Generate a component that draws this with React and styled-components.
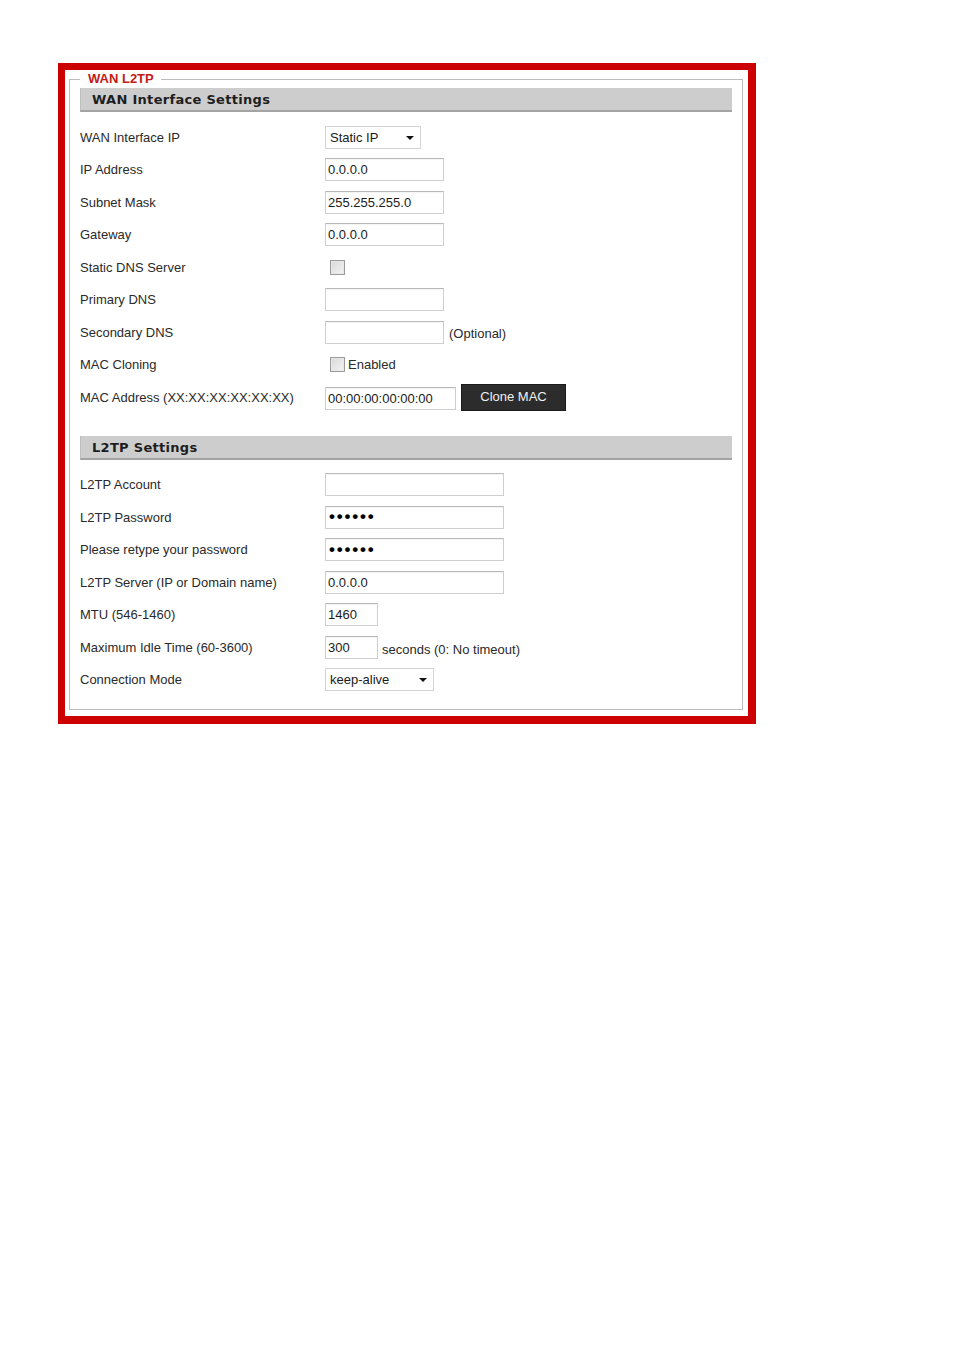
import React from 'react'
import styled, { createGlobalStyle } from 'styled-components'

const GlobalStyle = createGlobalStyle`
  html, body {
    margin: 0;
    padding: 0;
    background: #fff;
  }
  body {
    font-family: "Liberation Sans", Arial, sans-serif;
    font-size: 13px;
    color: #222;
  }
`;

const wanRows = [
    { label: "WAN Interface IP", kind: "select", value: "Static IP", width: 96 },
    { label: "IP Address", kind: "text", value: "0.0.0.0", width: 119 },
    { label: "Subnet Mask", kind: "text", value: "255.255.255.0", width: 119 },
    { label: "Gateway", kind: "text", value: "0.0.0.0", width: 119 },
    { label: "Static DNS Server", kind: "check" },
    { label: "Primary DNS", kind: "text", value: "", width: 119 },
    { label: "Secondary DNS", kind: "text", value: "", width: 119, note: "(Optional)" },
    { label: "MAC Cloning", kind: "check", note: "Enabled" },
    { label: "MAC Address (XX:XX:XX:XX:XX:XX)", kind: "mac", value: "00:00:00:00:00:00", width: 131 },
];

const l2tpRows = [
    { label: "L2TP Account", kind: "text", value: "", width: 179 },
    { label: "L2TP Password", kind: "password", value: "secret", width: 179 },
    { label: "Please retype your password", kind: "password", value: "secret", width: 179 },
    { label: "L2TP Server (IP or Domain name)", kind: "text", value: "0.0.0.0", width: 179 },
    { label: "MTU (546-1460)", kind: "text", value: "1460", width: 53 },
    { label: "Maximum Idle Time (60-3600)", kind: "text", value: "300", width: 53, note: "seconds (0: No timeout)", low: true },
    { label: "Connection Mode", kind: "select", value: "keep-alive", width: 109 },
];

const Control = ({ kind, value, width, note, low }) => {
    if (kind === "select") {
        return (
            <SelectWrap $width={width}>
                <Select defaultValue={value}>
                    <option>{value}</option>
                </Select>
            </SelectWrap>
        );
    }
    if (kind === "check") {
        return (
            <CheckLabel>
                <Checkbox type="checkbox" />
                {note && <span>{note}</span>}
            </CheckLabel>
        );
    }
    if (kind === "mac") {
        return (
            <>
                <TextInput $width={width} defaultValue={value} $top={2} />
                <CloneButton>Clone MAC</CloneButton>
            </>
        );
    }
    return (
        <>
            <TextInput
                $width={width}
                type={kind === "password" ? "password" : "text"}
                defaultValue={value}
            />
            {note && <Note $low={low}>{note}</Note>}
        </>
    );
};

const Section = ({ title, rows, first }) => (
    <SectionBlock $first={first}>
        <SectionHeader>{title}</SectionHeader>
        <Rows>
            {rows.map((row) => (
                <Row key={row.label}>
                    <Label>{row.label}</Label>
                    <Controls>
                        <Control {...row} />
                    </Controls>
                </Row>
            ))}
        </Rows>
    </SectionBlock>
);

export default function App() {
    return (
        <Page>
            <GlobalStyle />
            <RedFrame>
                <Fieldset>
                    <Legend>WAN L2TP</Legend>
                    <Section title="WAN Interface Settings" rows={wanRows} first />
                    <Section title="L2TP Settings" rows={l2tpRows} />
                </Fieldset>
            </RedFrame>
        </Page>
    );
}

const Page = styled.div`
    padding: 63px 0 0 58px;
    min-height: 1287px;
`;

const RedFrame = styled.div`
    box-sizing: content-box;
    width: 674px;
    border: 7px solid #cc0000;
    border-right-width: 8px;
    border-bottom-width: 8px;
    background: #fff;
    padding: 0 5px 6px 4px;
`;

const Fieldset = styled.fieldset`
    margin: 0;
    padding: 0 10px 13px 10px;
    border: 1px solid #bcbcbc;
    min-width: 0;
`;

const Legend = styled.legend`
    padding: 0 7px 0 8px;
    font-family: "Liberation Sans", Arial, sans-serif;
    font-weight: bold;
    font-size: 13px;
    line-height: 18px;
    color: #c41a1a;
`;

const SectionBlock = styled.div`
    margin-top: ${(p) => (p.$first ? "0" : "22px")};
`;

const SectionHeader = styled.div`
    height: 22px;
    line-height: 23px;
    background: #cdcdcd;
    border-bottom: 2px solid #a3a3a3;
    border-left: 1px solid #bdbdbd;
    padding-left: 11px;
    font-family: "DejaVu Sans", Verdana, sans-serif;
    font-weight: bold;
    font-size: 13px;
    letter-spacing: 0.3px;
    color: #1e1e1e;
`;

const Rows = styled.div`
    margin-top: 9px;
    display: flex;
    flex-direction: column;
`;

const Row = styled.div`
    display: grid;
    grid-template-columns: 245px 1fr;
    align-items: center;
    height: 32.5px;
`;

const Label = styled.div`
    font-size: 13px;
    color: #2a2a2a;
    white-space: nowrap;
`;

const Controls = styled.div`
    display: flex;
    align-items: center;
`;

const TextInput = styled.input`
    box-sizing: border-box;
    width: ${(p) => p.$width}px;
    height: 23px;
    margin: ${(p) => (p.$top ? `${p.$top}px 0 0 0` : "0")};
    padding: 0 2px;
    border: 1px solid #cfcfcf;
    border-top-color: #b9b9b9;
    box-shadow: inset 0 1px 1px rgba(0, 0, 0, 0.05);
    background: #fff;
    font-family: "Liberation Sans", Arial, sans-serif;
    font-size: 13px;
    color: #1a1a1a;
    outline: none;

    &[type="password"] {
        padding-left: 3px;
        font-size: 17px;
        font-weight: bold;
        letter-spacing: 1.8px;
        color: #000;
    }
`;

const Note = styled.span`
    margin-left: ${(p) => (p.$low ? "4px" : "5px")};
    margin-top: ${(p) => (p.$low ? "4px" : "2px")};
    font-size: 13px;
    color: #2a2a2a;
`;

const SelectWrap = styled.div`
    position: relative;
    width: ${(p) => p.$width}px;
    height: 23px;

    &::after {
        content: "";
        position: absolute;
        right: 7px;
        top: 10px;
        border-left: 4px solid transparent;
        border-right: 4px solid transparent;
        border-top: 4px solid #111;
        pointer-events: none;
    }
`;

const Select = styled.select`
    appearance: none;
    box-sizing: border-box;
    width: 100%;
    height: 100%;
    margin: 0;
    padding: 0 4px;
    border: 1px solid #d4d4d4;
    border-radius: 0;
    background: #fff;
    font-family: "Liberation Sans", Arial, sans-serif;
    font-size: 13px;
    color: #1a1a1a;
    outline: none;
`;

const CheckLabel = styled.label`
    display: flex;
    align-items: center;
    gap: 3px;
    font-size: 13px;
    color: #2a2a2a;
    margin-left: 5px;
`;

const Checkbox = styled.input`
    appearance: none;
    width: 15px;
    height: 15px;
    margin: 0;
    border: 1px solid #9a9a9a;
    background: linear-gradient(135deg, #d8d8d8, #f4f4f4);
    box-shadow: inset 0 0 0 1px #e8e8e8;
`;

const CloneButton = styled.button`
    box-sizing: border-box;
    width: 105px;
    height: 27px;
    margin-left: 5px;
    border: 1px solid #1a1a1a;
    background: #2c2c2c;
    color: #f0f0f0;
    font-family: "Liberation Sans", Arial, sans-serif;
    font-size: 13px;
    padding: 0 0 2px 0;
`;
